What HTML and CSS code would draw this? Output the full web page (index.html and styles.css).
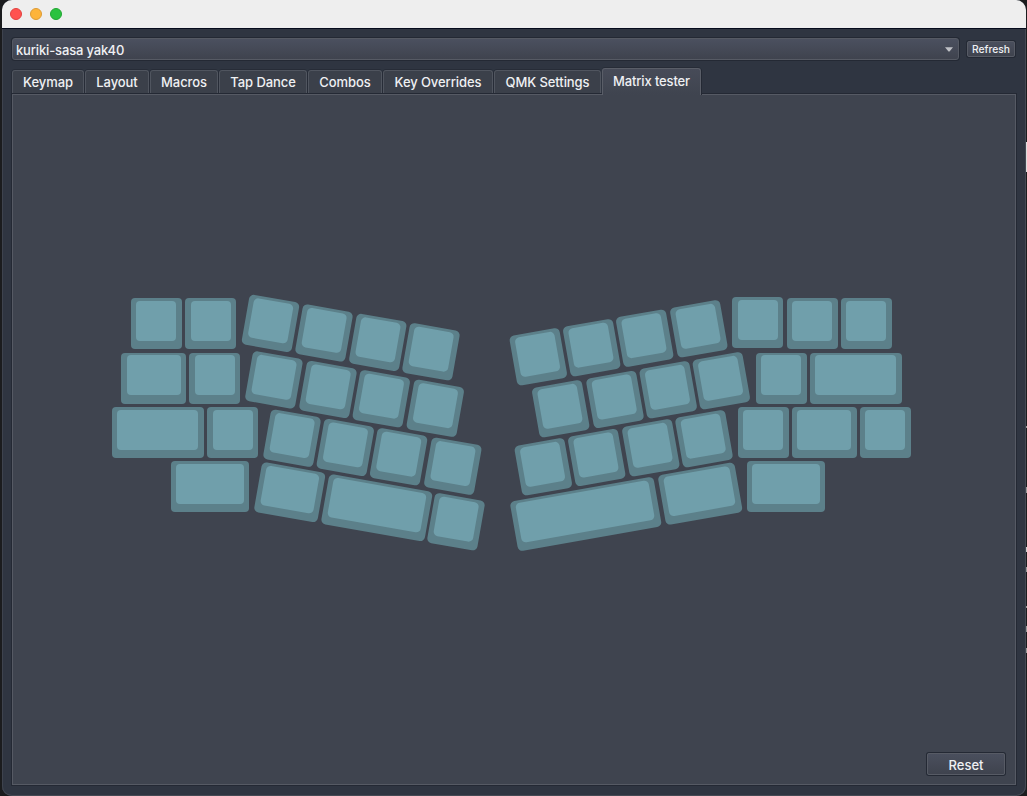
FILE: index.html
```html
<!DOCTYPE html>
<html lang="en">
<head>
<meta charset="utf-8">
<title>kuriki-sasa yak40</title>
<link rel="stylesheet" href="styles.css">
</head>
<body>
<div class="window">
  <header class="titlebar"><i class="light red"></i><i class="light amber"></i><i class="light green"></i></header>
  <main class="content">
    <div class="device-row">
      <div class="combo"><span class="device">kuriki-sasa yak40</span><svg class="arrow" width="8" height="5" viewBox="0 0 8 5"><path d="M0 .3h8L4.5 4.5h-1z" fill="#bfc1c6"/></svg></div>
      <button class="button refresh">Refresh</button>
    </div>
    <nav class="tabs">
      <div class="tab t1"><span>Keymap</span></div>
      <div class="tab t2"><span>Layout</span></div>
      <div class="tab t3"><span>Macros</span></div>
      <div class="tab t4"><span>Tap Dance</span></div>
      <div class="tab t5"><span>Combos</span></div>
      <div class="tab t6"><span>Key Overrides</span></div>
      <div class="tab t7"><span>QMK Settings</span></div>
      <div class="tab t8 active"><span>Matrix tester</span></div>
    </nav>
    <section class="pane">
      <svg class="keyboard" id="keyboard" width="1003" height="657" viewBox="13 95 1003 657"></svg>
      <div class="actions"><button class="button reset">Reset</button></div>
    </section>
  </main>
</div>
<div class="desktop-edge"><i class="e1"></i><i class="e2"></i><i class="e3"></i><i class="e4"></i><i class="e5"></i><i class="e6"></i><i class="e7"></i><i class="e8"></i></div>
<script src="keyboard.js"></script>
</body>
</html>
```
FILE: styles.css
```css
* { box-sizing: border-box; }
body {
  margin: 0;
  width: 1027px;
  height: 796px;
  overflow: hidden;
  position: relative;
  background: #1b1c1e;
  font-family: Inter, "Liberation Sans", sans-serif;
  font-size: 13px;
  font-weight: 500;
  color: #eff0f3;
}
.window {
  width: 1024px;
  height: 796px;
  margin-left: 2px;
  border-radius: 10px;
  overflow: hidden;
  background: #2f3541;
  box-shadow: inset 1px 0 #3e434e, inset -1px 0 #454a54, inset 0 -1px #454a54;
  display: flex;
  flex-direction: column;
}
.titlebar {
  height: 29px;
  flex: none;
  background: #eee;
  border-bottom: 1px solid #050b1c;
  display: flex;
  gap: 8px;
  padding: 8px 0 0 8px;
}
.light { width: 12px; height: 12px; border-radius: 50%; border: 1px solid; }
.red { background: #ff524f; border-color: #e2413e; }
.amber { background: #fdb43b; border-color: #dd9a33; }
.green { background: #2ac23f; border-color: #1fa631; }
.content { padding: 9px 9px 0; display: flex; flex-direction: column; }
.device-row { display: flex; align-items: center; gap: 8px; height: 22px; padding-left: 1px; }
.combo {
  width: 947px;
  height: 22px;
  border: 1px solid #565a64;
  border-radius: 3px;
  background: linear-gradient(#4b505f, #3f434e);
  box-shadow: 0 0 0 1px #242934;
  display: flex;
  align-items: center;
  justify-content: space-between;
  padding: 0 5px 0 3px;
}
.device { letter-spacing: -0.15px; padding-top: 1px; }
.button {
  border: 1px solid #575b65;
  border-radius: 2px;
  background: linear-gradient(#4a4f5d, #3f434e);
  box-shadow: 0 0 0 1px #242934;
  color: inherit;
  font: inherit;
  padding: 0;
  text-align: center;
}
.refresh { width: 48px; height: 16px; font-size: 10.3px; line-height: 14px; }
.tabs { display: flex; align-items: flex-end; height: 26px; margin-top: 8px; gap: 1px; padding-left: 1px; }
.tab {
  height: 24px;
  background: #3b404a;
  border: 1px solid #50555f;
  border-bottom-color: #242934;
  border-radius: 3px 3px 0 0;
  box-shadow: 0 -1px #272c37, -1px 0 #272c37;
  line-height: 23px;
  letter-spacing: -0.08px;
  text-align: center;
  white-space: nowrap;
}
.active {
  position: relative;
  height: 27px;
  margin-bottom: -1px;
  background: linear-gradient(#474b58, #3f444f);
  border-color: #5a5e68;
  border-bottom: 0;
  line-height: 25px;
  box-shadow: 0 -1px #272c37, 1px 0 #242934;
}
.t1 { width: 72px; }
.t2 { width: 64px; }
.t3 { width: 68px; }
.t4 { width: 88px; }
.t5 { width: 74px; }
.t6 { width: 110px; }
.t7 { width: 107px; }
.t8 { width: 99px; letter-spacing: -0.15px; }
.pane {
  width: 1004px;
  height: 691px;
  margin-left: 1px;
  border: 1px solid #565a64;
  background: #3f444f;
  box-shadow: 0 0 0 1px #242934;
}
.keyboard { display: block; }
.keycap { fill: #5c808a; }
.keytop { fill: #709fab; }
.actions { display: flex; justify-content: flex-end; padding: 1px 10px 0 0; }
.reset { width: 78px; height: 22px; line-height: 22px; }
.desktop-edge { position: absolute; top: 0; right: 0; width: 1px; height: 796px; }
.desktop-edge i { position: absolute; left: 0; width: 1px; height: 2px; background: #999; }
.desktop-edge .e1 { top: 142px; height: 30px; background: #ddd; }
.desktop-edge .e2 { top: 426px; }
.desktop-edge .e3 { top: 487px; height: 6px; }
.desktop-edge .e4 { top: 547px; height: 5px; background: #ccc; }
.desktop-edge .e5 { top: 567px; height: 5px; }
.desktop-edge .e6 { top: 606px; }
.desktop-edge .e7 { top: 626px; height: 6px; }
.desktop-edge .e8 { top: 648px; height: 5px; }
```
FILE: keyboard.js
```javascript
// Upright keys: x, y, width, top-face inset x, top-face inset y, top-face width
const upright = [
  [131, 298, 51, 5, 3, 40], [185, 298, 51, 6, 3, 40],
  [121, 353, 65, 6, 2, 54], [189, 353, 51, 6, 2, 40],
  [112, 407, 92, 5, 3, 81], [207, 407, 51, 6, 3, 40],
  [171, 461, 78, 5, 3, 68],
  [732, 297, 51, 6, 3, 40], [787, 298, 51, 5, 3, 40], [841, 298, 51, 5, 3, 40],
  [756, 353, 51, 5, 2, 40], [810, 353, 92, 5, 2, 81],
  [738, 407, 51, 5, 3, 40], [792, 407, 65, 5, 3, 54], [860, 407, 51, 5, 3, 40],
  [747, 461, 78, 5, 3, 68]
];

// Tilted keys: centre x, centre y, width, angle
const tilted = [
  [270.5, 323.4, 51, 10], [324, 333, 51, 10], [377.8, 342.4, 51, 10], [431, 351.8, 51, 10],
  [273.9, 379.9, 51, 10], [328, 389.5, 51, 10], [381.3, 398.8, 51, 10], [435.3, 408.3, 51, 10],
  [292, 438.2, 51, 10], [345.3, 447.5, 51, 10], [398.6, 456.8, 51, 10], [452.8, 466.2, 51, 10],
  [289.7, 492.3, 64.7, 10], [376.8, 507.8, 105.3, 10], [456, 521.8, 51, 10],
  [538.3, 356.8, 51, -10], [591.7, 347.7, 51, -10], [644.7, 338.2, 51, -10], [698.8, 328.8, 51, -10],
  [560.7, 408.8, 51, -10], [615, 399.5, 51, -10], [668.2, 389.8, 51, -10], [721.3, 380.8, 51, -10],
  [543.3, 466.8, 51, -10], [596.7, 457.5, 51, -10], [650.8, 447.8, 51, -10], [704, 438.7, 51, -10],
  [585.8, 514, 146, -10], [700.2, 493.7, 78, -10]
];

const board = document.getElementById('keyboard');

function rect(parent, name, x, y, w, h, r) {
  const el = document.createElementNS('http://www.w3.org/2000/svg', 'rect');
  el.setAttribute('class', name);
  Object.entries({ x, y, width: w, height: h, rx: r }).forEach(([k, v]) => el.setAttribute(k, v));
  parent.appendChild(el);
}

upright.forEach(([x, y, w, dx, dy, tw]) => {
  rect(board, 'keycap', x, y, w, 51, 4);
  rect(board, 'keytop', x + dx, y + dy, tw, 40, 4);
});

tilted.forEach(([cx, cy, w, angle]) => {
  const g = document.createElementNS('http://www.w3.org/2000/svg', 'g');
  g.setAttribute('transform', `translate(${cx} ${cy}) rotate(${angle})`);
  rect(g, 'keycap', -w / 2 + 0.1, -25.3, w - 0.2, 50.6, 4.8);
  rect(g, 'keytop', -w / 2 + 5.2, -22.6, w - 11, 40, 4.5);
  board.appendChild(g);
});
```
